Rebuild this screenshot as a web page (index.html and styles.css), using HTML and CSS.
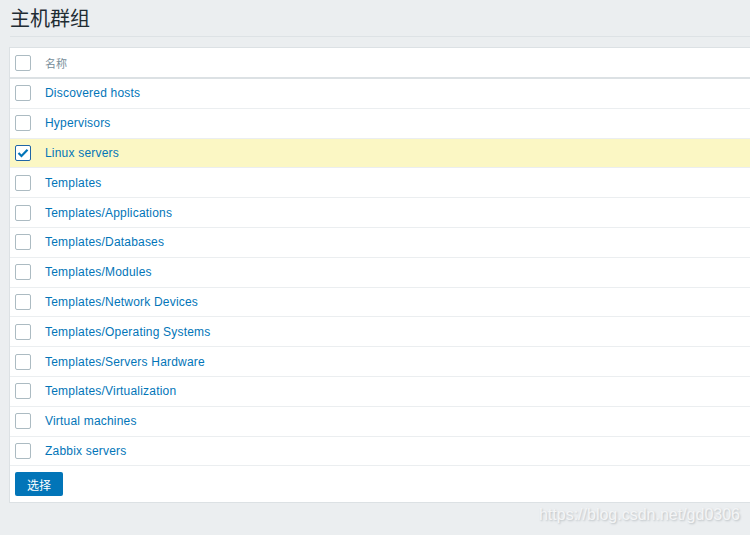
FILE: index.html
```html
<!DOCTYPE html>
<html lang="zh">
<head>
    <meta charset="UTF-8">
    <title>主机群组</title>
    <link rel="stylesheet" href="styles.css">
</head>
<body>
    <div class="page">
        <h1 class="title">主机群组</h1>

        <form class="panel">
            <div class="list">
                <div class="row head">
                    <span class="box"></span>
                    <span class="name">名称</span>
                </div>
                <div class="row"><span class="box"></span><a class="name" href="#">Discovered hosts</a></div>
                <div class="row"><span class="box"></span><a class="name" href="#">Hypervisors</a></div>
                <div class="row selected">
                    <span class="box checked">
                        <svg width="12" height="10" viewBox="0 0 12 10"><path d="M1.5 5 L4.5 8 L10.5 1.8" fill="none" stroke="#0275b8" stroke-width="2.2"/></svg>
                    </span>
                    <a class="name" href="#">Linux servers</a>
                </div>
                <div class="row"><span class="box"></span><a class="name" href="#">Templates</a></div>
                <div class="row"><span class="box"></span><a class="name" href="#">Templates/Applications</a></div>
                <div class="row"><span class="box"></span><a class="name" href="#">Templates/Databases</a></div>
                <div class="row"><span class="box"></span><a class="name" href="#">Templates/Modules</a></div>
                <div class="row"><span class="box"></span><a class="name" href="#">Templates/Network Devices</a></div>
                <div class="row"><span class="box"></span><a class="name" href="#">Templates/Operating Systems</a></div>
                <div class="row"><span class="box"></span><a class="name" href="#">Templates/Servers Hardware</a></div>
                <div class="row"><span class="box"></span><a class="name" href="#">Templates/Virtualization</a></div>
                <div class="row"><span class="box"></span><a class="name" href="#">Virtual machines</a></div>
                <div class="row"><span class="box"></span><a class="name" href="#">Zabbix servers</a></div>
            </div>
            <div class="actions">
                <button type="button" class="btn">选择</button>
            </div>
        </form>
    </div>

    <div class="watermark">https://blog.csdn.net/gd0306</div>
</body>
</html>
```

FILE: styles.css
```css
body {
    margin: 0;
    background: #ebeef0;
    font-family: Arial, "Liberation Sans", "Noto Sans CJK SC", sans-serif;
    font-size: 12px;
    color: #1f2c33;
    overflow: hidden;
}

.page {
    padding: 0 0 0 9px;
}

.title {
    margin: 0 0 10px 1px;
    padding: 6px 0 7px 0;
    height: 23px;
    border-bottom: 1px solid #dde2e5;
    font-family: "Noto Sans CJK SC", sans-serif;
    font-size: 20px;
    font-weight: normal;
    line-height: 23px;
    color: #1f2c33;
}

.panel {
    background: #ffffff;
    border: 1px solid #dce1e4;
    border-right: none;
}

.row {
    display: flex;
    align-items: center;
    height: 28.8px;
    border-bottom: 1px solid #ebeef0;
    padding-left: 5px;
}

.row.head {
    height: 29px;
    border-bottom: 2px solid #dce1e4;
}

.row.selected {
    background: #fbf7c4;
}

.box {
    display: flex;
    align-items: center;
    justify-content: center;
    box-sizing: border-box;
    width: 16px;
    height: 16px;
    border: 1px solid #acbbc2;
    border-radius: 2px;
    background: #ffffff;
}

.box.checked {
    border-color: #1f65a6;
}

.name {
    margin-left: 14px;
    color: #0275b8;
    text-decoration: none;
    letter-spacing: 0.2px;
}

.head .name {
    color: #768d99;
    font-family: "Noto Sans CJK SC", sans-serif;
    font-size: 11px;
    letter-spacing: 0;
}

.actions {
    padding: 6px 5px 6px 5px;
}

.btn {
    display: block;
    width: 48px;
    height: 24px;
    padding: 0;
    border: none;
    border-radius: 2px;
    background: #0275b8;
    color: #ffffff;
    font-family: "Noto Sans CJK SC", sans-serif;
    font-size: 12px;
}

.watermark {
    position: absolute;
    right: 10px;
    bottom: 11px;
    font-family: Arial, "Liberation Sans", sans-serif;
    font-size: 16px;
    color: #f4f5f6;
    text-shadow: 1px 1px 2px #b9bfc3;
}
```
